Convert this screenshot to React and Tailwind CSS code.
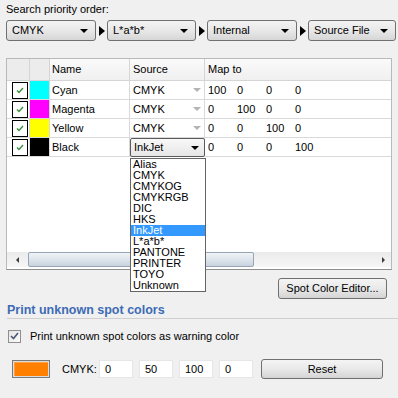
import React from "react";

function DownTri({ color = "border-t-black" }) {
  return (
    <div
      className={`w-0 h-0 border-l-[4px] border-r-[4px] border-t-[4px] border-l-transparent border-r-transparent ${color}`}
    />
  );
}

function SepArrow() {
  return (
    <div className="w-[11px] flex items-center justify-center">
      <div className="w-0 h-0 border-t-[5px] border-b-[5px] border-l-[6px] border-t-transparent border-b-transparent border-l-black" />
    </div>
  );
}

function Combo({ label, w }) {
  return (
    <div
      className={`h-[21px] ${w} rounded-[3px] border border-[#707070] bg-gradient-to-b from-[#f3f3f3] via-[#e8e8e8] to-[#d6d6d6] flex items-center justify-between pl-[5px] pr-[7px]`}
    >
      <span>{label}</span>
      <DownTri />
    </div>
  );
}

function Check() {
  return (
    <svg width="8" height="7" viewBox="0 0 8 7">
      <path d="M1 3.5 L3 5.5 L7 1" fill="none" stroke="#3a8f3a" strokeWidth="1.4" />
    </svg>
  );
}

const rows = [
  { name: "Cyan", color: "bg-[#00ffff]", vals: ["100", "0", "0", "0"] },
  { name: "Magenta", color: "bg-[#ff00ff]", vals: ["0", "100", "0", "0"] },
  { name: "Yellow", color: "bg-[#ffff00]", vals: ["0", "0", "100", "0"] },
  { name: "Black", color: "bg-black", vals: ["0", "0", "0", "100"], combo: true },
];

const items = ["Alias", "CMYK", "CMYKOG", "CMYKRGB", "DIC", "HKS", "InkJet", "L*a*b*", "PANTONE", "PRINTER", "TOYO", "Unknown"];

function Btn({ children, w, h }) {
  return (
    <div
      className={`${w} ${h} rounded-[3px] border border-[#707070] bg-gradient-to-b from-[#f4f4f4] via-[#e9e9e9] to-[#d4d4d4] flex items-center justify-center`}
    >
      {children}
    </div>
  );
}

function Input({ v }) {
  return (
    <div className="w-[34px] h-[18px] bg-white border border-[#e6e6e6] flex items-center pl-[5px]">{v}</div>
  );
}

export default function App() {
  return (
    <div className="relative w-[398px] h-[398px] overflow-hidden bg-[#f0f0f0] text-[11px] text-black font-['Liberation_Sans',Arial,sans-serif] leading-[13px]">
      <div className="h-[18px] pl-[6px] pt-[3px]">Search priority order:</div>
      <div className="mt-[2px] flex pl-[6px]">
        <Combo label="CMYK" w="w-[90px]" />
        <SepArrow />
        <Combo label="L*a*b*" w="w-[89px]" />
        <SepArrow />
        <Combo label="Internal" w="w-[90px]" />
        <SepArrow />
        <Combo label="Source File" w="w-[88px]" />
      </div>

      <div className="mt-[17px] mx-[6px] h-[212px] border border-[#b9b9b9] border-b-[#8e8e8e] bg-white flex flex-col">
        <div className="h-[22px] grid grid-cols-[23px_20px_80px_75px_1fr] border-b border-[#d5d5d5] bg-gradient-to-b from-[#fafafa] to-[#f0f0f0]">
          <div className="border-r border-[#d5d5d5] bg-[#ececec]" />
          <div className="border-r border-[#d5d5d5] bg-[#ececec]" />
          <div className="border-r border-[#d5d5d5] flex items-center pl-[2px]">Name</div>
          <div className="border-r border-[#d5d5d5] flex items-center pl-[3px]">Source</div>
          <div className="flex items-center pl-[3px]">Map to</div>
        </div>
        {rows.map((r) => (
          <div key={r.name} className="h-[19px] grid grid-cols-[23px_20px_80px_75px_1fr] border-b border-[#d9d9d9]">
            <div className="border-r border-[#d9d9d9] flex items-center pl-[5px]">
              <div className="w-[16px] h-[17px] border border-black flex items-center justify-center">
                <Check />
              </div>
            </div>
            <div className={`border-r border-[#d9d9d9] ${r.color}`} />
            <div className="border-r border-[#d9d9d9] flex items-center pl-[2px]">{r.name}</div>
            {r.combo ? (
              <div className="border-r border-[#d9d9d9] relative">
                <div className="absolute left-0 top-0 w-[75px] h-[19px] rounded-[2px] border border-[#5a5a5a] bg-gradient-to-b from-[#f8f8f8] to-[#e6e6e6] flex items-center justify-between pl-[3px] pr-[5px] z-10">
                  <span>InkJet</span>
                  <DownTri />
                </div>
              </div>
            ) : (
              <div className="border-r border-[#d9d9d9] flex items-center justify-between pl-[3px] pr-[3px]">
                <span>CMYK</span>
                <DownTri color="border-t-[#b4b4b4]" />
              </div>
            )}
            <div className="flex items-center pl-[3px]">
              {r.vals.map((v, i) => (
                <div key={i} className="w-[29px]">
                  {v}
                </div>
              ))}
            </div>
          </div>
        ))}
        <div className="flex-1" />
        <div className="h-[15px] flex bg-gradient-to-b from-[#ebebeb] to-[#f6f6f6] mb-[2px]">
          <div className="w-[21px] flex items-center justify-center">
            <div className="w-0 h-0 border-t-[3px] border-b-[3px] border-r-[3px] border-t-transparent border-b-transparent border-r-[#3c3c3c]" />
          </div>
          <div className="w-[226px] h-[15px] rounded-[2px] border border-[#97a5b4] bg-gradient-to-b from-[#f1f4f7] via-[#dde4ec] to-[#c9d3de]" />
          <div className="flex-1" />
          <div className="w-[16px] flex items-center justify-center">
            <div className="w-0 h-0 border-t-[3px] border-b-[3px] border-l-[3px] border-t-transparent border-b-transparent border-l-[#3c3c3c]" />
          </div>
        </div>
      </div>

      <div className="mt-[8px] flex justify-end pr-[11px]">
        <Btn w="w-[109px]" h="h-[21px]">Spot Color Editor...</Btn>
      </div>

      <div className="mt-[4px] ml-[7px] h-[16px] border-b border-[#cfcfcf] font-bold text-[12.5px] text-[#3d6bb5] leading-[14px]">
        Print unknown spot colors
      </div>

      <div className="mt-[10px] h-[14px] flex items-center pl-[8px]">
        <div className="w-[13px] h-[13px] border border-[#8f8f8f] bg-gradient-to-br from-[#e4e4e4] to-[#fbfbfb] flex items-center justify-center">
          <svg width="9" height="8" viewBox="0 0 9 8">
            <path d="M1 4 L3.5 6.5 L8 1" fill="none" stroke="#4a5878" strokeWidth="1.6" />
          </svg>
        </div>
        <span className="ml-[9px]">Print unknown spot colors as warning color</span>
      </div>

      <div className="mt-[16px] h-[20px] flex items-center pl-[12px]">
        <div className="w-[38px] h-[18px] border border-[#7a7a7a] p-[1px] bg-[#dcdcdc]">
          <div className="w-full h-full bg-[#ff8000] border-t border-l border-[#ffa040]" />
        </div>
        <span className="ml-[12px] w-[37px]">CMYK:</span>
        <div className="flex gap-[6px]">
          <Input v="0" />
          <Input v="50" />
          <Input v="100" />
          <Input v="0" />
        </div>
        <div className="ml-[8px]">
          <Btn w="w-[122px]" h="h-[20px]">Reset</Btn>
        </div>
      </div>

      <div className="absolute left-[130px] top-[158px] w-[76px] h-[134px] border border-[#646464] bg-white z-20">
        {items.map((it) => (
          <div
            key={it}
            className={`h-[11px] leading-[11px] pl-[2px] ${it === "InkJet" ? "bg-[#3399ff] text-white" : ""}`}
          >
            {it}
          </div>
        ))}
      </div>
    </div>
  );
}
